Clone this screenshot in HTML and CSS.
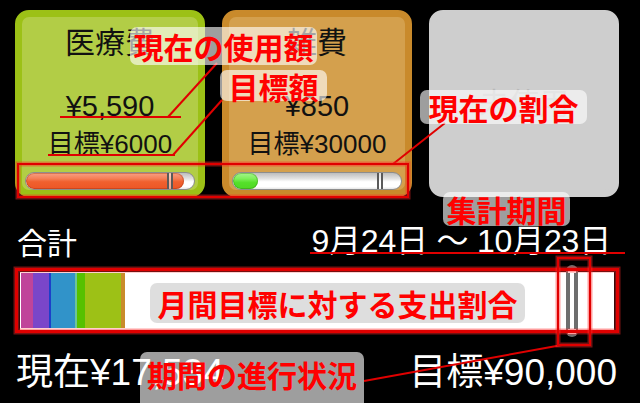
FILE: index.html
```html
<!DOCTYPE html>
<html lang="ja">
<head>
<meta charset="utf-8">
<link rel="stylesheet" href="styles.css">
</head>
<body>
<div class="screen">
  <div class="cards">
    <div class="card card-med">
      <div class="cat">医療費</div>
      <div class="amt">¥5,590</div>
      <div class="goal">目標¥6000</div>
      <div class="bar">
        <div class="fill fill-red" style="width:94%"></div>
        <div class="tick" style="left:84%"></div>
      </div>
    </div>
    <div class="card card-misc">
      <div class="cat">雑費</div>
      <div class="amt">¥850</div>
      <div class="goal">目標¥30000</div>
      <div class="bar">
        <div class="fill fill-green" style="width:15%"></div>
        <div class="tick" style="left:86%"></div>
      </div>
    </div>
    <div class="card card-empty">
      <div class="cat unused">未使用</div>
    </div>
  </div>

  <div class="sum-head">
    <span class="sum-title">合計</span>
    <span class="period">9月24日 〜 10月23日</span>
  </div>

  <div class="total-bar">
    <div class="seg" style="width:12px;background:#c0449a"></div>
    <div class="seg" style="width:16px;background:#7a46c9"></div>
    <div class="seg" style="width:2px;background:#1c3fc9"></div>
    <div class="seg" style="width:24px;background:#3193c9"></div>
    <div class="seg" style="width:2px;background:#6ec49a"></div>
    <div class="seg" style="width:8px;background:#55c100"></div>
    <div class="seg" style="width:36px;background:#9dc116"></div>
    <div class="seg" style="width:4px;background:#c98b2b"></div>
    <div class="marker"></div>
  </div>

  <div class="sum-foot">
    <span>現在¥17,534</span>
    <span>目標¥90,000</span>
  </div>

  <div class="notes">
    <svg class="note-lines" width="640" height="403" viewBox="0 0 640 403">
      <g stroke="#e00000" stroke-width="2" fill="none">
        <line x1="60" y1="117" x2="181" y2="117"/>
        <line x1="168" y1="117" x2="217" y2="63"/>
        <line x1="48" y1="155" x2="175" y2="155"/>
        <line x1="173" y1="155" x2="222" y2="100"/>
        <line x1="393" y1="164" x2="445" y2="123"/>
        <line x1="310" y1="253" x2="625" y2="253"/>
        <line x1="364" y1="381" x2="562" y2="345"/>
      </g>
      <g fill="none">
        <rect x="18" y="164" width="390" height="33" stroke="rgba(255,40,40,0.45)" stroke-width="5"/>
        <rect x="18" y="164" width="390" height="33" stroke="#e00000" stroke-width="2"/>
        <rect x="16.5" y="269.5" width="601" height="62" stroke="rgba(255,40,40,0.45)" stroke-width="6"/>
        <rect x="16.5" y="269.5" width="601" height="62" stroke="#e00000" stroke-width="3"/>
        <rect x="558" y="258" width="32" height="87" stroke="rgba(255,40,40,0.45)" stroke-width="5"/>
        <rect x="558" y="258" width="32" height="87" stroke="#e00000" stroke-width="2"/>
      </g>
    </svg>
    <div class="label l-used">現在の使用額</div>
    <div class="label l-goal">目標額</div>
    <div class="label l-ratio">現在の割合</div>
    <div class="label l-period">集計期間</div>
    <div class="label l-month">月間目標に対する支出割合</div>
    <div class="label l-progress">期間の進行状況</div>
  </div>
</div>
</body>
</html>
```

FILE: styles.css
```css
html, body {
  margin: 0;
  padding: 0;
  background: #000;
}

.screen {
  position: relative;
  width: 640px;
  height: 403px;
  overflow: hidden;
  background: #000;
  font-family: "Liberation Sans", "Noto Sans CJK JP", sans-serif;
}

.cards {
  display: grid;
  grid-template-columns: 190px 190px 190px;
  column-gap: 17px;
  padding: 10px 0 0 15px;
}

.card {
  box-sizing: border-box;
  height: 187px;
  border-radius: 14px;
  border: 7px solid transparent;
  display: flex;
  flex-direction: column;
  align-items: center;
  color: #111;
}

.card-med {
  background: #b2cd46;
  border-color: #9cc116;
}

.card-misc {
  background: #d4a04d;
  border-color: #c98a2b;
}

.card-empty {
  background: #cecece;
  border-color: #cecece;
  justify-content: center;
}

.cat {
  font-family: "Noto Sans CJK JP", sans-serif;
  font-size: 30px;
  line-height: 34px;
  margin-top: 6px;
}

.unused {
  color: #b9b9b9;
  margin-top: -6px;
}

.amt {
  font-size: 29px;
  line-height: 34px;
  margin-top: 32px;
}

.goal {
  font-size: 26px;
  line-height: 34px;
  margin-top: 4px;
}

.bar {
  position: relative;
  box-sizing: border-box;
  width: 170px;
  height: 18px;
  margin-top: 11px;
  border: 1px solid #8d8d8d;
  border-radius: 9px;
  overflow: hidden;
  background: linear-gradient(#bdbdbd 0%, #e2e2e2 35%, #ffffff 55%, #ffffff 85%, #e6e6e6 100%);
}

.fill {
  height: 100%;
  border-radius: 9px;
  box-sizing: border-box;
}

.fill-red {
  background: linear-gradient(#f7a084 0%, #f47e56 35%, #f0602e 55%, #ec5626 100%);
  box-shadow: inset 0 0 0 1px rgba(150, 40, 10, 0.35);
}

.fill-green {
  background: linear-gradient(#a6f58e 0%, #7ef05a 35%, #55e02a 60%, #4fd824 100%);
  box-shadow: inset 0 0 0 1px rgba(40, 120, 10, 0.35);
}

.tick {
  position: absolute;
  top: 0;
  width: 6px;
  height: 100%;
  box-sizing: border-box;
  border-left: 2px solid #5a5a5a;
  border-right: 2px solid #5a5a5a;
  background: rgba(255, 255, 255, 0.5);
}

.sum-head {
  display: flex;
  justify-content: space-between;
  align-items: center;
  margin-top: 27px;
  padding: 0 29px 0 17px;
  color: #fff;
  font-family: "Noto Sans CJK JP", sans-serif;
  line-height: 34px;
}

.sum-title {
  font-size: 30px;
}

.period {
  font-family: "Liberation Sans", "Noto Sans CJK JP", sans-serif;
  font-size: 32px;
  letter-spacing: -0.2px;
}

.total-bar {
  position: relative;
  display: flex;
  box-sizing: border-box;
  width: 594px;
  height: 58px;
  margin: 14px 0 0 20px;
  padding: 1px 1px 2px 1px;
  background: #fff;
}

.seg {
  height: 100%;
}

.marker {
  position: absolute;
  left: 546px;
  top: -7px;
  width: 12px;
  height: 72px;
  box-sizing: border-box;
  border-radius: 6px;
  background: #6e6e6e;
}

.marker::before {
  content: "";
  position: absolute;
  left: 4px;
  top: 5px;
  width: 4px;
  height: 62px;
  background: #fff;
}

.marker::after {
  content: "";
  position: absolute;
  left: 2px;
  top: 3px;
  width: 8px;
  height: 5px;
  background: #fff;
  box-shadow: 0 61px 0 #fff;
}

.sum-foot {
  display: flex;
  justify-content: space-between;
  margin-top: 22px;
  padding: 0 23px 0 16px;
  color: #fff;
  font-size: 37px;
  line-height: 42px;
}

.notes {
  position: absolute;
  left: 0;
  top: 0;
  width: 640px;
  height: 403px;
  pointer-events: none;
}

.note-lines {
  position: absolute;
  left: 0;
  top: 0;
}

.label {
  position: absolute;
  box-sizing: border-box;
  display: flex;
  align-items: center;
  justify-content: center;
  border-radius: 7px;
  background: rgba(255, 255, 255, 0.62);
  color: #ff0000;
  font-family: "Noto Sans CJK JP", sans-serif;
  font-weight: 700;
  font-size: 30px;
  line-height: 1;
  white-space: nowrap;
}

.l-used {
  left: 130px;
  top: 27px;
  width: 187px;
  height: 38px;
}

.l-goal {
  left: 220px;
  top: 70px;
  width: 107px;
  height: 31px;
}

.l-ratio {
  left: 420px;
  top: 90px;
  width: 167px;
  height: 34px;
}

.l-period {
  left: 443px;
  top: 192px;
  width: 127px;
  height: 34px;
}

.l-month {
  left: 150px;
  top: 283px;
  width: 375px;
  height: 40px;
  background: rgba(200, 200, 200, 0.6);
}

.l-progress {
  left: 140px;
  top: 352px;
  width: 224px;
  height: 57px;
  padding-bottom: 14px;
}
```
